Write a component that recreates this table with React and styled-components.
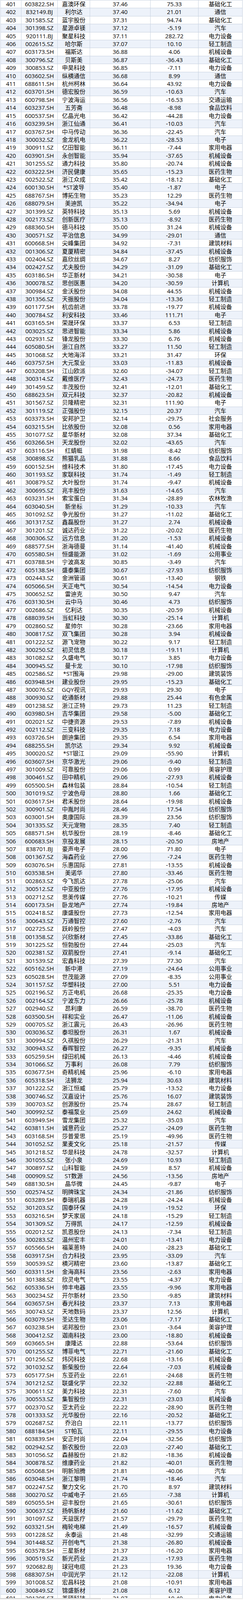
import React from 'react';
import styled, { createGlobalStyle } from 'styled-components';

const raw = `401 603822.SH 嘉澳环保 37.46 75.33 基础化工
402 832149.BJ 利尔达 37.40 21.01 通信
403 301585.SZ 蓝宇股份 37.31 94.74 基础化工
404 301398.SZ 星源卓镁 37.12 -5.19 汽车
405 920111.BJ 聚星科技 37.11 282.72 电力设备
406 002615.SZ 哈尔斯 37.07 10.10 轻工制造
407 603173.SH 福斯达 36.88 4.06 机械设备
408 300796.SZ 贝斯美 36.87 -36.43 基础化工
409 300853.SZ 申昊科技 36.85 -7.11 电力设备
410 603602.SH 纵横通信 36.68 8.99 通信
411 688611.SH 杭州柯林 36.64 43.92 电力设备
412 603701.SH 德宏股份 36.59 -10.63 汽车
413 600798.SH 宁波海运 36.56 -16.53 交通运输
414 603237.SH 五芳斋 36.48 -8.98 食品饮料
415 600537.SH 亿晶光电 36.42 -44.28 电力设备
416 603239.SH 浙江仙通 36.41 -10.03 汽车
417 603767.SH 中马传动 36.36 -22.45 汽车
418 300032.SZ 金龙机电 36.22 -28.53 电子
419 300911.SZ 亿田智能 36.11 -7.44 家用电器
420 603901.SH 永创智能 35.94 -37.65 机械设备
421 301255.SZ 通力科技 35.80 -20.74 机械设备
422 603222.SH 济民健康 35.65 -15.23 医药生物
423 002522.SZ 浙江众成 35.42 -18.12 基础化工
424 600130.SH *ST波导 35.40 -1.87 电子
425 688767.SH 博拓生物 35.23 12.29 医药生物
426 688079.SH 美迪凯 35.22 -34.94 电子
427 301399.SZ 英特科技 35.13 5.69 机械设备
428 002173.SZ 创新医疗 35.13 -8.92 医药生物
429 688360.SH 德马科技 35.00 31.24 机械设备
430 300571.SZ 平治信息 34.99 -29.01 通信
431 600668.SH 尖峰集团 34.92 -7.31 建筑材料
432 001306.SZ 夏厦精密 34.84 -37.45 机械设备
433 002404.SZ 嘉欣丝绸 34.67 8.27 纺织服饰
434 002427.SZ 尤夫股份 34.29 -31.09 基础化工
435 603186.SH 华正新材 34.21 -30.58 电子
436 300078.SZ 思创医惠 34.20 -30.59 计算机
437 300984.SZ 金沃股份 34.08 44.55 机械设备
438 301356.SZ 天振股份 34.04 -13.36 轻工制造
439 601177.SH 杭齿前进 33.78 -19.77 机械设备
440 300784.SZ 利安科技 33.46 111.71 电子
441 603165.SH 荣晟环保 33.37 6.53 轻工制造
442 003025.SZ 思进智能 33.34 5.86 机械设备
443 002931.SZ 锋龙股份 33.30 6.76 机械设备
444 605080.SH 浙江自然 33.27 11.50 轻工制造
445 301068.SZ 大地海洋 33.21 31.47 环保
446 603757.SH 大元泵业 33.03 -11.83 机械设备
447 603208.SH 江山欧派 32.60 -34.07 轻工制造
448 300314.SZ 戴维医疗 32.43 -24.73 医药生物
449 301459.SZ 丰茂股份 32.41 -12.01 基础化工
450 688623.SH 双元科技 32.37 -20.82 机械设备
451 301567.SZ 贝隆精密 32.31 111.90 电子
452 301119.SZ 正强股份 32.15 20.37 汽车
453 603373.SH 安邦护卫 32.14 -29.75 社会服务
454 603215.SH 比依股份 32.08 0.56 家用电器
455 301077.SZ 星华新材 32.08 37.34 基础化工
456 603266.SH 天龙股份 32.02 -43.65 汽车
457 603116.SH 红蜻蜓 31.98 -8.42 纺织服饰
458 300898.SZ 熊猫乳品 31.88 8.66 食品饮料
459 600152.SH 维科技术 31.80 -17.45 电力设备
460 301193.SZ 家联科技 31.74 -1.49 轻工制造
461 300879.SZ 大叶股份 31.74 -9.47 机械设备
462 300695.SZ 兆丰股份 31.63 -14.65 汽车
463 603231.SH 索宝蛋白 31.34 -28.89 农林牧渔
464 603040.SH 新坐标 31.29 -10.33 汽车
465 301092.SZ 争光股份 31.27 -11.02 基础化工
466 301317.SZ 鑫磊股份 31.27 2.74 机械设备
467 301201.SZ 诚达药业 31.22 -20.02 医药生物
468 300306.SZ 远方信息 31.20 -1.53 机械设备
469 688577.SH 浙海德曼 31.14 -41.40 机械设备
470 605580.SH 恒盛能源 31.02 -1.69 公用事业
471 603788.SH 宁波高发 30.85 -3.49 汽车
472 605138.SH 盛泰集团 30.67 -27.93 纺织服饰
473 002443.SZ 金洲管道 30.61 -13.40 钢铁
474 605066.SH 天正电气 30.54 -14.54 电力设备
475 300652.SZ 雷迪克 30.50 9.47 汽车
476 603130.SH 云中马 30.46 4.73 纺织服饰
477 002686.SZ 亿利达 30.35 -20.59 机械设备
478 688039.SH 当虹科技 30.30 -25.14 计算机
479 002860.SZ 星帅尔 30.28 -23.66 家用电器
480 300817.SZ 双飞集团 30.28 3.94 机械设备
481 001222.SZ 源飞宠物 30.22 9.17 轻工制造
482 300250.SZ 初灵信息 30.18 -19.11 计算机
483 301082.SZ 久盛电气 30.17 3.85 电力设备
484 300945.SZ 曼卡龙 30.10 -17.98 纺织服饰
485 002586.SZ *ST围海 29.98 -29.00 建筑装饰
486 603948.SH 建业股份 29.95 -15.23 基础化工
487 300076.SZ GQY视讯 29.93 29.30 电子
488 300930.SZ 屹通新材 29.88 25.44 有色金属
489 001238.SZ 浙江正特 29.73 11.23 轻工制造
490 603980.SH 吉华集团 29.58 -5.00 基础化工
491 002021.SZ 中捷资源 29.53 -7.89 机械设备
492 002112.SZ 三变科技 29.35 7.18 电力设备
493 603726.SH 朗迪集团 29.35 6.54 家用电器
494 688255.SH 凯尔达 29.34 9.92 机械设备
495 300020.SZ *ST银江 29.09 -55.90 计算机
496 603607.SH 京华激光 29.06 -9.40 轻工制造
497 301009.SZ 可靠股份 29.06 0.99 美容护理
498 300461.SZ 田中精机 29.06 -27.93 机械设备
499 605500.SH 森林包装 28.84 -10.54 轻工制造
500 301019.SZ 宁波色母 28.80 1.66 基础化工
501 603617.SH 君禾股份 28.64 -19.98 机械设备
502 300901.SZ 中胤时尚 28.46 17.54 纺织服饰
503 603001.SH 奥康国际 28.39 23.56 纺织服饰
504 301335.SZ 天元宠物 28.35 7.40 轻工制造
505 688571.SH 杭华股份 28.19 -8.46 基础化工
506 600683.SH 京投发展 28.15 -20.50 房地产
507 838701.BJ 豪声电子 28.00 71.80 电子
508 001367.SZ 海森药业 27.96 -7.24 医药生物
509 603076.SH 乐惠国际 27.81 -13.55 机械设备
510 603538.SH 美诺华 27.80 -33.46 医药生物
511 002863.SZ 今飞凯达 27.78 -25.06 汽车
512 300512.SZ 中亚股份 27.76 -17.95 机械设备
513 002712.SZ 思美传媒 27.76 -10.21 传媒
514 600173.SH 卧龙地产 27.74 -19.84 房地产
515 002418.SZ 康盛股份 27.73 -12.54 家用电器
516 300643.SZ 万通智控 27.60 -2.76 汽车
517 002725.SZ 跃岭股份 27.47 -4.03 汽车
518 001358.SZ 兴欣新材 27.45 -33.86 基础化工
519 301225.SZ 恒勃股份 27.44 -25.03 汽车
520 002381.SZ 双箭股份 27.41 -9.14 基础化工
521 301539.SZ 宏鑫科技 27.39 77.30 汽车
522 605162.SH 新中港 27.19 -24.64 公用事业
523 605028.SH 世茂能源 27.09 -8.35 公用事业
524 301157.SZ 华塑科技 27.00 5.51 电力设备
525 002196.SZ 方正电机 26.68 -25.35 电力设备
526 002164.SZ 宁波东力 26.66 -25.78 机械设备
527 002940.SZ 昂利康 26.59 -38.70 医药生物
528 603500.SH 祥和实业 26.47 -11.06 机械设备
529 000705.SZ 浙江震元 26.43 -26.96 医药生物
530 003036.SZ 泰坦股份 26.31 1.67 机械设备
531 300994.SZ 久祺股份 26.29 -21.31 汽车
532 300943.SZ 春晖智控 26.27 -9.35 机械设备
533 605259.SH 绿田机械 26.13 -4.46 机械设备
534 301066.SZ 万事利 26.08 7.79 纺织服饰
535 603677.SH 奇精机械 25.96 -6.10 家用电器
536 605318.SH 法狮龙 25.94 30.63 建筑材料
537 301222.SZ 浙江恒威 25.79 -13.52 电力设备
538 300746.SZ 汉嘉设计 25.76 16.07 建筑装饰
539 300703.SZ 创源股份 25.74 28.67 轻工制造
540 300992.SZ 泰福泵业 25.69 24.62 机械设备
541 603949.SH 雪龙集团 25.32 -35.03 汽车
542 603811.SH 诚意药业 25.27 -24.09 医药生物
543 603168.SH 莎普爱思 25.19 -49.96 医药生物
544 301052.SZ 果麦文化 25.18 -21.57 传媒
545 301218.SZ 华是科技 24.78 -32.57 计算机
546 301055.SZ 张小泉 24.69 10.93 轻工制造
547 300897.SZ 山科智能 24.59 8.57 机械设备
548 000909.SZ ST数源 24.56 -13.56 房地产
549 688130.SH 晶华微 24.45 -9.87 电子
550 002574.SZ 明牌珠宝 24.34 -21.86 纺织服饰
551 603289.SH 泰瑞机器 24.28 -24.24 机械设备
552 301203.SZ 国泰环保 24.19 -19.52 环保
553 603216.SH 梦天家居 24.18 -15.29 轻工制造
554 301309.SZ 万得凯 24.17 -12.59 机械设备
555 002012.SZ 凯恩股份 24.13 -7.34 轻工制造
556 300283.SZ 温州宏丰 24.01 -13.41 电力设备
557 605566.SH 福莱蒽特 24.00 -28.23 基础化工
558 603917.SH 合力科技 23.95 -33.09 汽车
559 300539.SZ 横河精密 23.60 -13.87 基础化工
560 603311.SH 金海高科 23.56 -2.63 家用电器
561 301388.SZ 欣灵电气 23.55 -4.37 电力设备
562 605336.SH 帅丰电器 23.55 -9.96 家用电器
563 300234.SZ 开尔新材 23.50 -9.85 建筑材料
564 603657.SH 春光科技 23.37 7.13 家用电器
565 300743.SZ 天地数码 23.37 12.56 计算机
566 603079.SH 圣达生物 23.06 -7.17 基础化工
567 603238.SH 诺邦股份 23.01 -3.64 美容护理
568 300412.SZ 迦南科技 23.00 -18.80 机械设备
569 603665.SH 康隆达 22.88 -53.64 纺织服饰
570 001255.SZ 博菲电气 22.71 -21.60 基础化工
571 001256.SZ 炜冈科技 22.68 -13.16 机械设备
572 301032.SZ 新柴股份 22.64 -7.03 机械设备
573 605177.SH 东亚药业 22.61 -24.68 医药生物
574 301212.SZ 联盛化学 22.32 -22.88 基础化工
575 300611.SZ 美力科技 22.31 -7.60 汽车
576 300553.SZ 集智股份 22.31 -23.03 机械设备
577 002370.SZ 亚太药业 22.22 -28.90 医药生物
578 001333.SZ 光华股份 22.16 -20.52 基础化工
579 002687.SZ 乔治白 22.11 -13.77 纺织服饰
580 688184.SH ST帕瓦 22.11 -29.55 电力设备
581 603839.SH 安正时尚 22.04 -32.56 纺织服饰
582 002942.SZ 新农股份 22.03 -27.40 基础化工
583 301056.SZ 森赫股份 21.82 -18.36 机械设备
584 300878.SZ 维康药业 21.82 -40.01 医药生物
585 605068.SH 明新旭腾 21.81 -40.06 汽车
586 603048.SH 浙江黎明 21.74 -18.46 汽车
587 002247.SZ 聚力文化 21.70 8.97 建筑材料
588 300270.SZ 中威电子 21.65 -7.38 计算机
589 605055.SH 迎丰股份 21.65 -30.61 纺织服饰
590 300637.SZ 扬帆新材 21.60 -11.62 基础化工
591 301097.SZ 天益医疗 21.57 -29.79 医药生物
592 603321.SH 梅轮电梯 21.49 -16.57 机械设备
593 001228.SZ 永泰运 21.48 -32.99 交通运输
594 301448.SZ 开创电气 21.38 -26.80 机械设备
595 603578.SH 三星新材 21.37 -16.20 家用电器
596 300519.SZ 新光药业 21.23 -17.93 医药生物
597 920682.BJ 球冠电缆 21.23 19.36 电力设备
598 688307.SH 中润光学 21.12 -22.08 计算机
599 301008.SZ 宏昌科技 21.08 -10.91 家用电器
600 300849.SZ 锦盛新材 21.08 6.12 美容护理
601 301295.SZ 美硕科技 21.07 -10.49 电力设备`;

const rows = raw.split('\n').map(line => line.trim().split(' '));
const lastIndex = rows.length - 1;

const K = 4096 / 4815;
const rowHeight = 24 * K;
const cutHeight = 10 * K;
const line = '#c7d1df';

const GlobalStyle = createGlobalStyle`
	html, body {
		margin: 0;
		padding: 0;
		background: #fff;
	}
	body {
		font-family: "Open Sans", "Noto Sans CJK SC", sans-serif;
		color: #000;
	}
`;

const Table = styled.div`
	margin-left: 1px;
	width: 621px;
	border-top: 1px solid ${line};
	border-left: 1px solid ${line};
	box-sizing: border-box;
`;

// the last row is only partly in view, cut off by the scrollbar
const Row = styled.div`
	display: grid;
	grid-template-columns: 53px 93px 83px 155px 123px 113px;
	height: ${props => (props.$cut ? cutHeight : rowHeight)}px;
	overflow: hidden;
	box-sizing: border-box;
	border-bottom: ${props => (props.$cut ? '0' : `1px solid ${line}`)};
	background: ${props => (props.$alt ? '#edf2fa' : '#fff')};
`;

const Cell = styled.div`
	box-sizing: border-box;
	height: ${rowHeight - 1}px;
	border-right: 1px solid ${line};
	text-align: center;
	font-size: 15px;
	line-height: ${rowHeight - 1}px;
	white-space: nowrap;
	overflow: hidden;
`;

const ScrollTrack = styled.div`
	display: flex;
	height: 3px;
	background: #ececec;
`;

const ScrollThumb = styled.div`
	width: 259px;
	height: 100%;
	background: #d8d8d8;
	border-right: 2px solid #fff;
`;

export default function App() {
	return (
		<>
			<GlobalStyle />
			<Table>
				{rows.map((cols, i) => (
					<Row key={cols[0]} $alt={i % 2 === 1} $cut={i === lastIndex}>
						{cols.map((value, j) => (
							<Cell key={j}>{value}</Cell>
						))}
					</Row>
				))}
			</Table>
			<ScrollTrack>
				<ScrollThumb />
			</ScrollTrack>
		</>
	);
}
